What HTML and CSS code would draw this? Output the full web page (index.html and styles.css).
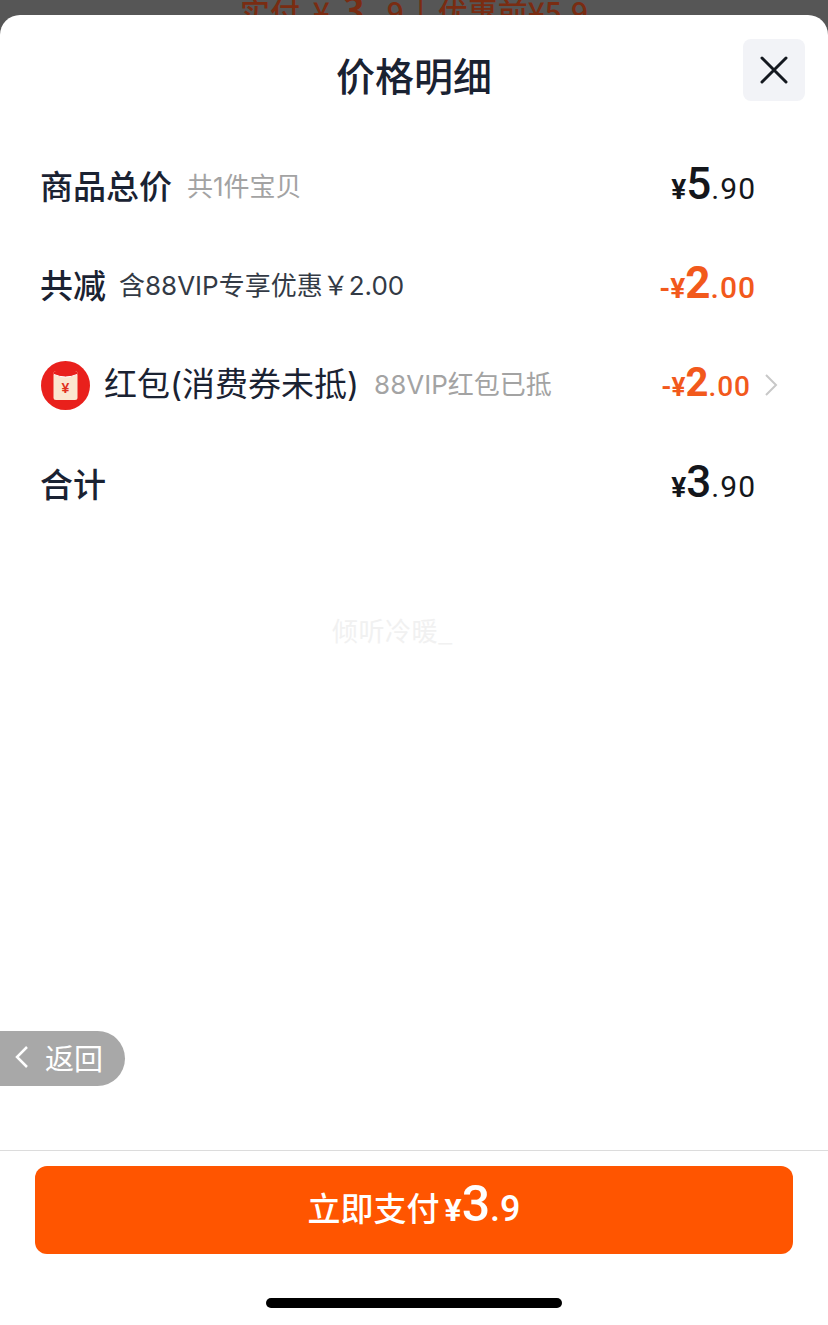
FILE: index.html
```html
<!DOCTYPE html>
<html lang="zh-CN">
<head>
<meta charset="utf-8">
<title>价格明细</title>
<link rel="stylesheet" href="styles.css">
</head>
<body>
<div class="page">
  <div class="behind"><div class="behind-text">实付 ¥ <b>3</b> .9 | 优惠前¥5.9</div></div>
  <main class="sheet">
    <header class="head">
      <span></span>
      <h1 class="title">价格明细</h1>
      <button class="close" aria-label="关闭">
        <svg width="28" height="28" viewBox="0 0 28 28"><path d="M2 2 L26 26 M26 2 L2 26" stroke="#14181f" stroke-width="3" stroke-linecap="round" fill="none"/></svg>
      </button>
    </header>
    <section class="rows">
      <div class="row">
        <div class="left"><span class="label">商品总价</span><span class="note grey">共1件宝贝</span></div>
        <div class="price"><span class="yen">¥</span><span class="big">5</span><span class="small">.90</span></div>
      </div>
      <div class="row">
        <div class="left"><span class="label">共减</span><span class="note">含88VIP专享优惠￥2.00</span></div>
        <div class="price orange"><span class="yen">-¥</span><span class="big">2</span><span class="small">.00</span></div>
      </div>
      <div class="row">
        <div class="left">
          <svg class="packet" width="49" height="49" viewBox="0 0 49 49">
            <circle cx="24.500" cy="24.500" r="24.500" fill="#e9201c"/>
            <rect x="12.500" y="10" width="24" height="29" rx="2.500" fill="#fbe6cf"/>
            <path d="M12.500 12 a2.500 2.500 0 0 1 2.500 -2 h19 a2.500 2.500 0 0 1 2.500 2 v1.500 q-12 5 -24 0 z" fill="#e9201c"/>
            <path d="M13 13.500 q11.500 5 23 0" stroke="#fff" stroke-width="1" fill="none"/>
            <text x="24.500" y="32" class="packet-yen">¥</text>
          </svg>
          <span class="label plain">红包(消费券未抵)</span><span class="note grey">88VIP红包已抵</span>
        </div>
        <div class="right">
          <div class="price orange tight"><span class="yen">-¥</span><span class="big">2</span><span class="small">.00</span></div>
          <svg class="chev" width="14" height="24" viewBox="0 0 14 24"><path d="M2 2 L12 12 L2 22" stroke="#c8c8c8" stroke-width="2" fill="none"/></svg>
        </div>
      </div>
      <div class="row">
        <div class="left"><span class="label">合计</span></div>
        <div class="price"><span class="yen">¥</span><span class="big">3</span><span class="small">.90</span></div>
      </div>
    </section>
    <div class="spacer"></div>
    <footer class="foot">
      <button class="pay"><span class="pay-text">立即支付</span><span class="yen">¥</span><span class="big">3</span><span class="small">.9</span></button>
      <div class="home"></div>
    </footer>
    <div class="mark">倾听冷暖_</div>
    <div class="back">
      <svg width="14" height="24" viewBox="0 0 14 24"><path d="M12 2 L2 12 L12 22" stroke="#fff" stroke-width="2.500" fill="none"/></svg>
      <span>返回</span>
    </div>
  </main>
</div>
</body>
</html>
```
FILE: styles.css
```css
* { box-sizing: border-box; }
html, body { margin: 0; padding: 0; }
body {
  width: 828px;
  height: 1325px;
  overflow: hidden;
  background: #565656;
  font-family: "Noto Sans CJK SC", "Noto Sans", sans-serif;
  color: #1a2232;
}
.page { display: flex; flex-direction: column; height: 1325px; }
.behind { height: 15px; overflow: hidden; display: flex; justify-content: center; background: #565656; }
.behind-text {
  margin-top: -10px;
  font-size: 30px;
  line-height: 36px;
  font-weight: 500;
  word-spacing: 6px;
  color: #7a2c12;
  white-space: nowrap;
  height: 36px;
}
.behind-text b { font-size: 38px; }
.sheet {
  position: relative;
  flex: 1;
  display: flex;
  flex-direction: column;
  background: #fff;
  border-radius: 20px 20px 0 0;
}
.head {
  display: grid;
  grid-template-columns: 1fr auto 1fr;
  align-items: start;
  height: 122px;
  padding: 24px 23px 0;
}
.title {
  margin: 7px 0 0;
  font-size: 39px;
  line-height: 56px;
  font-weight: 500;
  color: #1a2232;
}
.close {
  justify-self: end;
  width: 62px;
  height: 62px;
  padding: 0;
  border: 0;
  border-radius: 8px;
  background: #f2f3f7;
  display: flex;
  align-items: center;
  justify-content: center;
}
.rows { display: flex; flex-direction: column; padding: 0 72px 0 40px; }
.row { height: 99.300px; display: flex; align-items: center; justify-content: space-between; }
.left { display: flex; align-items: center; }
.label { font-size: 33px; font-weight: 500; line-height: 44px; white-space: nowrap; margin-top: -3px; }
.label.plain { font-family: "Inter", "Noto Sans CJK SC", sans-serif; font-weight: 400; margin: -2px 0 0 14px; }
.note { font-family: "Inter", "Noto Sans CJK SC", sans-serif; font-size: 26px; line-height: 36px; margin-left: 13px; color: #333a45; white-space: nowrap; }
.note.grey { color: #a3a3a3; margin-left: 15px; }
.packet { margin-left: 1px; }
.packet-yen { font-family: "Liberation Sans", sans-serif; font-size: 14px; font-weight: 700; fill: #e0301e; text-anchor: middle; }
.right { display: flex; align-items: center; margin-right: -22px; }
.chev { margin-left: 13px; }
.price {
  display: flex;
  align-items: baseline;
  font-family: "Roboto", sans-serif;
  color: #14161b;
  white-space: nowrap;
  line-height: 44px;
}
.price .yen, .pay .yen { font-size: 28px; font-weight: 700; }
.price .big { font-size: 44px; font-weight: 500; }
.price .small { font-size: 30px; letter-spacing: 1px; }
.orange { color: #f2591c; }
.orange .big { font-weight: 700; }
.orange .small { font-weight: 500; }
.tight .big { font-size: 40px; }
.tight .small { font-size: 28px; }
.tight .yen { font-size: 26px; }
.spacer { flex: 1; }
.foot {
  border-top: 1px solid #dcdcdc;
  padding: 15px 35px 17px;
  display: flex;
  flex-direction: column;
  align-items: center;
}
.pay {
  width: 100%;
  height: 88px;
  border: 0;
  border-radius: 12px;
  background: #ff5500;
  color: #fff;
  display: flex;
  align-items: baseline;
  justify-content: center;
  padding: 9px 0 0;
  font-family: "Roboto", sans-serif;
}
.pay-text { font-family: "Noto Sans CJK SC", sans-serif; font-size: 33px; font-weight: 500; margin-right: 5px; }
.pay .yen { font-size: 32px; }
.pay .big { font-size: 50px; font-weight: 500; }
.pay .small { font-size: 36px; font-weight: 500; }
.home { width: 296px; height: 10px; margin-top: 44px; border-radius: 5px; background: #000; }
.mark {
  position: absolute;
  left: 332px;
  top: 596px;
  font-size: 26px;
  letter-spacing: 0.500px;
  line-height: 38px;
  color: #f1f1f1;
}
.back {
  position: absolute;
  left: 0;
  top: 1016px;
  width: 125px;
  height: 55px;
  padding: 0 0 3px 15px;
  display: flex;
  align-items: center;
  gap: 16px;
  background: #a8a8a8;
  border-radius: 0 28px 28px 0;
  color: #fff;
  font-size: 29px;
}
```
